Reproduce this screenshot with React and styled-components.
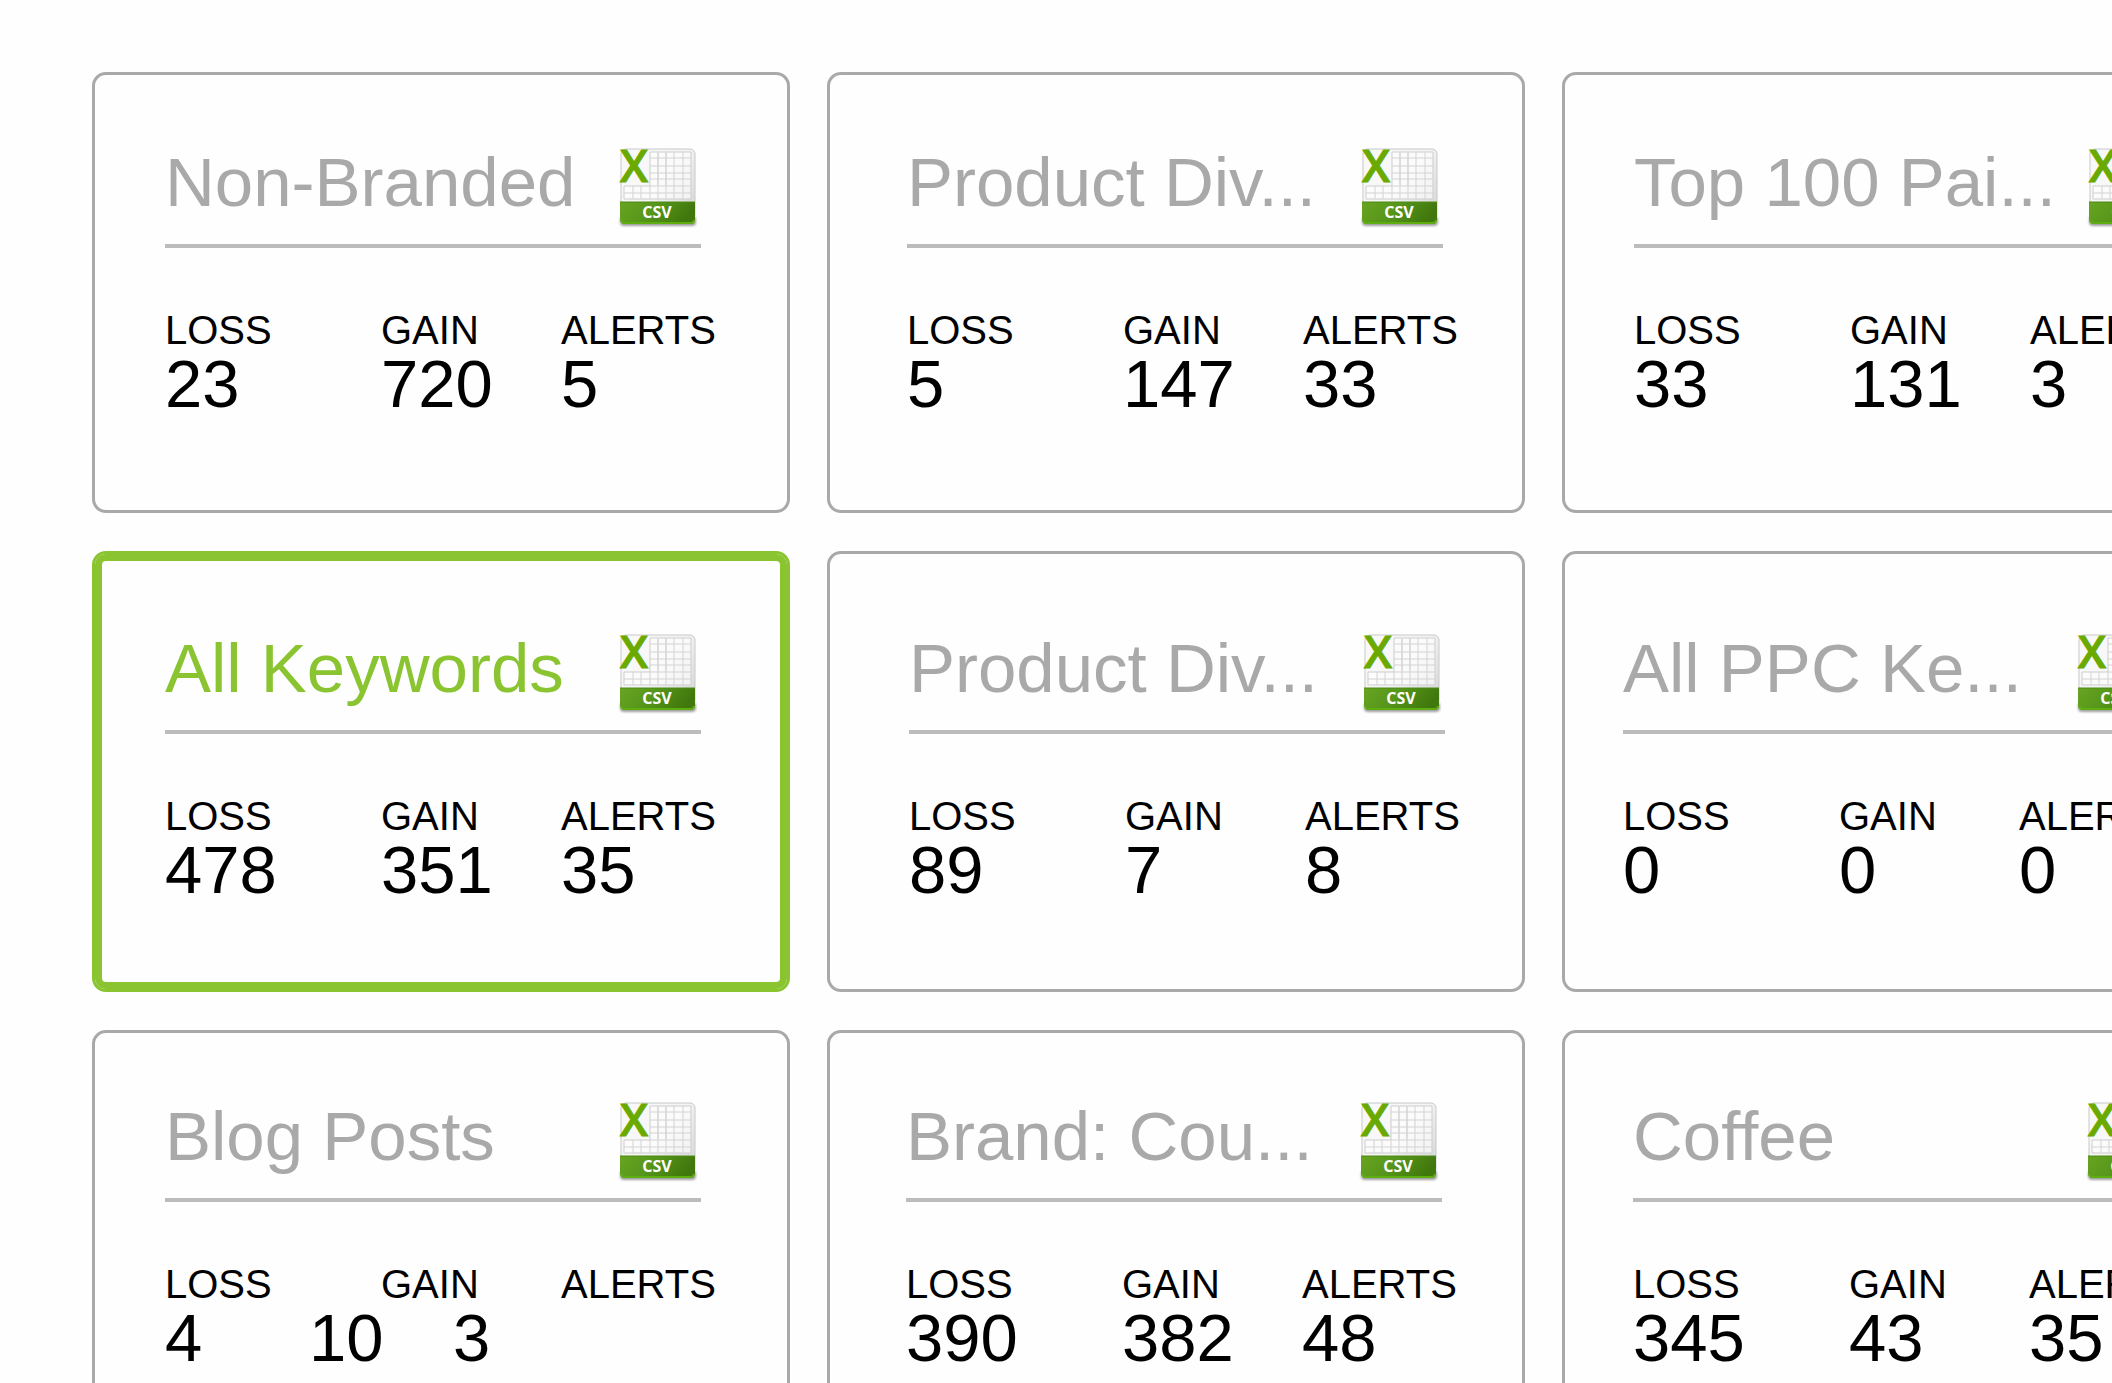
import React, { useId } from 'react';
import styled, { createGlobalStyle, css } from 'styled-components';

const GlobalStyle = createGlobalStyle`
  * {
    box-sizing: border-box;
  }

  body {
    margin: 0;
    background-color: #fefefe;
    font-family: 'Liberation Sans', Arial, Helvetica, sans-serif;
  }
`;

const Page = styled.main`
  height: 100vh;
  padding: 72px 92px;
  overflow: auto;
  scrollbar-width: none;
`;

const Cards = styled.ul`
  display: grid;
  grid-template-columns: repeat(3, minmax(698px, 1fr));
  gap: 38px 37px;
  margin: 0;
  padding: 0;
  list-style: none;
`;

const Card = styled.li`
  min-height: 441px;
  padding: ${(props) => props.$top}px 0 0 ${(props) => props.$left}px;
  border: 3px solid #a9a9a9;
  border-radius: 14px;
  ${(props) =>
    props.$selected &&
    css`
      border-color: #8ac430;
      box-shadow: inset 0 0 0 7px #8ac430;
    `}
`;

const Header = styled.header`
  display: flex;
  justify-content: space-between;
  width: 536px;
  height: 104px;
  border-bottom: 4px solid #bcbcbc;
`;

const Title = styled.h2`
  margin: 0;
  font-size: 69px;
  font-weight: normal;
  line-height: 78px;
  white-space: nowrap;
  color: ${(props) => (props.$selected ? '#8ac430' : '#a9a9a9')};
`;

const Download = styled.button`
  width: 80px;
  height: 84px;
  margin: 2px 3px 0 0;
  padding: 0;
  border: none;
  background: none;
  cursor: pointer;

  svg {
    display: block;
    overflow: visible;
  }
`;

const Stats = styled.table`
  display: block;
  margin-top: 60px;
  border-collapse: collapse;
  color: #000;
`;

const Row = styled.tr`
  display: grid;
  grid-template-columns: ${(props) =>
    props.$tight ? '144px 144px auto' : '216px 180px auto'};
`;

const Label = styled.th`
  padding: 0;
  font-size: 40px;
  font-weight: normal;
  line-height: 44px;
  text-align: left;
`;

const Value = styled.td`
  padding: 0;
  font-size: 67px;
  line-height: 64px;
`;

const CsvIcon = () => {
  const id = useId();
  return (
    <svg width="80" height="84" viewBox="0 0 80 84" aria-hidden="true">
      <defs>
        <linearGradient id={`${id}paper`} x1="0" y1="0" x2="1" y2="0.7">
          <stop offset="0" stopColor="#fafafa" />
          <stop offset="0.6" stopColor="#f4f4f4" />
          <stop offset="1" stopColor="#dcdcdc" />
        </linearGradient>
        <linearGradient id={`${id}band`} x1="0" y1="0" x2="1" y2="0.25">
          <stop offset="0" stopColor="#68a421" />
          <stop offset="0.5" stopColor="#55951a" />
          <stop offset="1" stopColor="#41780d" />
        </linearGradient>
        <filter id={`${id}blur`} x="-10%" y="-50%" width="120%" height="200%">
          <feGaussianBlur stdDeviation="1.2" />
        </filter>
      </defs>
      <rect
        x="2"
        y="70"
        width="76"
        height="10"
        rx="4"
        fill="#777"
        opacity="0.7"
        filter={`url(#${id}blur)`}
      />
      <rect
        x="3"
        y="3"
        width="74"
        height="70"
        rx="5"
        fill={`url(#${id}paper)`}
        stroke="#c8c8c8"
      />
      <path
        d="M32 6H73V53H6V40H32Z"
        fill="#fff"
        fillOpacity="0.6"
        stroke="#cdcdcd"
      />
      <path
        d="M40 6V53M48 6V53M56 6V53M65 6V53M32 12H73M32 20H73M32 27H73M32 33H73M32 40H73M6 47H73M15 40V53M23 40V53M32 40V53"
        fill="none"
        stroke="#d3d3d3"
      />
      {/* clear the grid cells that fall behind the X */}
      <path d="M4 4H31V39H4Z" fill="#f8f8f8" />
      <path d="M40 7V39M48 7V39" stroke="#d3d3d3" />
      <path
        d="M2 56H77V73Q77 78 72 78H7Q2 78 2 73Z"
        fill={`url(#${id}band)`}
      />
      <path d="M2 56H77" stroke="#4b8a14" />
      <path
        d="M3 74Q4 77 7 77H72Q76 77 76 74"
        fill="none"
        stroke="#5fae10"
        strokeWidth="2"
      />
      <text
        x="16"
        y="36"
        fill="#6aaa00"
        stroke="#6aaa00"
        fontFamily="'Open Sans', sans-serif"
        fontSize="45"
        fontWeight="600"
        textAnchor="middle"
      >
        X
      </text>
      <text
        x="39"
        y="72"
        fill="#fff"
        fontFamily="'Open Sans', sans-serif"
        fontSize="16"
        fontWeight="700"
        textAnchor="middle"
      >
        CSV
      </text>
    </svg>
  );
};

const groups = [
  { title: 'Non-Branded', values: [23, 720, 5], top: 69, left: 70 },
  { title: 'Product Div...', values: [5, 147, 33], top: 69, left: 77 },
  { title: 'Top 100 Pai...', values: [33, 131, 3], top: 69, left: 69 },
  { title: 'All Keywords', values: [478, 351, 35], top: 76, left: 70, selected: true },
  { title: 'Product Div...', values: [89, 7, 8], top: 76, left: 79 },
  { title: 'All PPC Ke...', values: [0, 0, 0], top: 76, left: 58 },
  { title: 'Blog Posts', values: [4, 10, 3], top: 65, left: 70, tight: true },
  { title: 'Brand: Cou...', values: [390, 382, 48], top: 65, left: 76 },
  { title: 'Coffee', values: [345, 43, 35], top: 65, left: 68 },
];

const App = () => {
  return (
    <>
      <GlobalStyle />
      <Page>
        <Cards>
          {groups.map((group, i) => (
            <Card
              key={i}
              $top={group.top}
              $left={group.left}
              $selected={group.selected}
            >
              <Header>
                <Title $selected={group.selected}>{group.title}</Title>
                <Download type="button" aria-label={`Download ${group.title}`}>
                  <CsvIcon />
                </Download>
              </Header>
              <Stats>
                <thead>
                  <Row>
                    <Label scope="col">LOSS</Label>
                    <Label scope="col">GAIN</Label>
                    <Label scope="col">ALERTS</Label>
                  </Row>
                </thead>
                <tbody>
                  <Row $tight={group.tight}>
                    {group.values.map((value, j) => (
                      <Value key={j}>{value}</Value>
                    ))}
                  </Row>
                </tbody>
              </Stats>
            </Card>
          ))}
        </Cards>
      </Page>
    </>
  );
};

export default App;
